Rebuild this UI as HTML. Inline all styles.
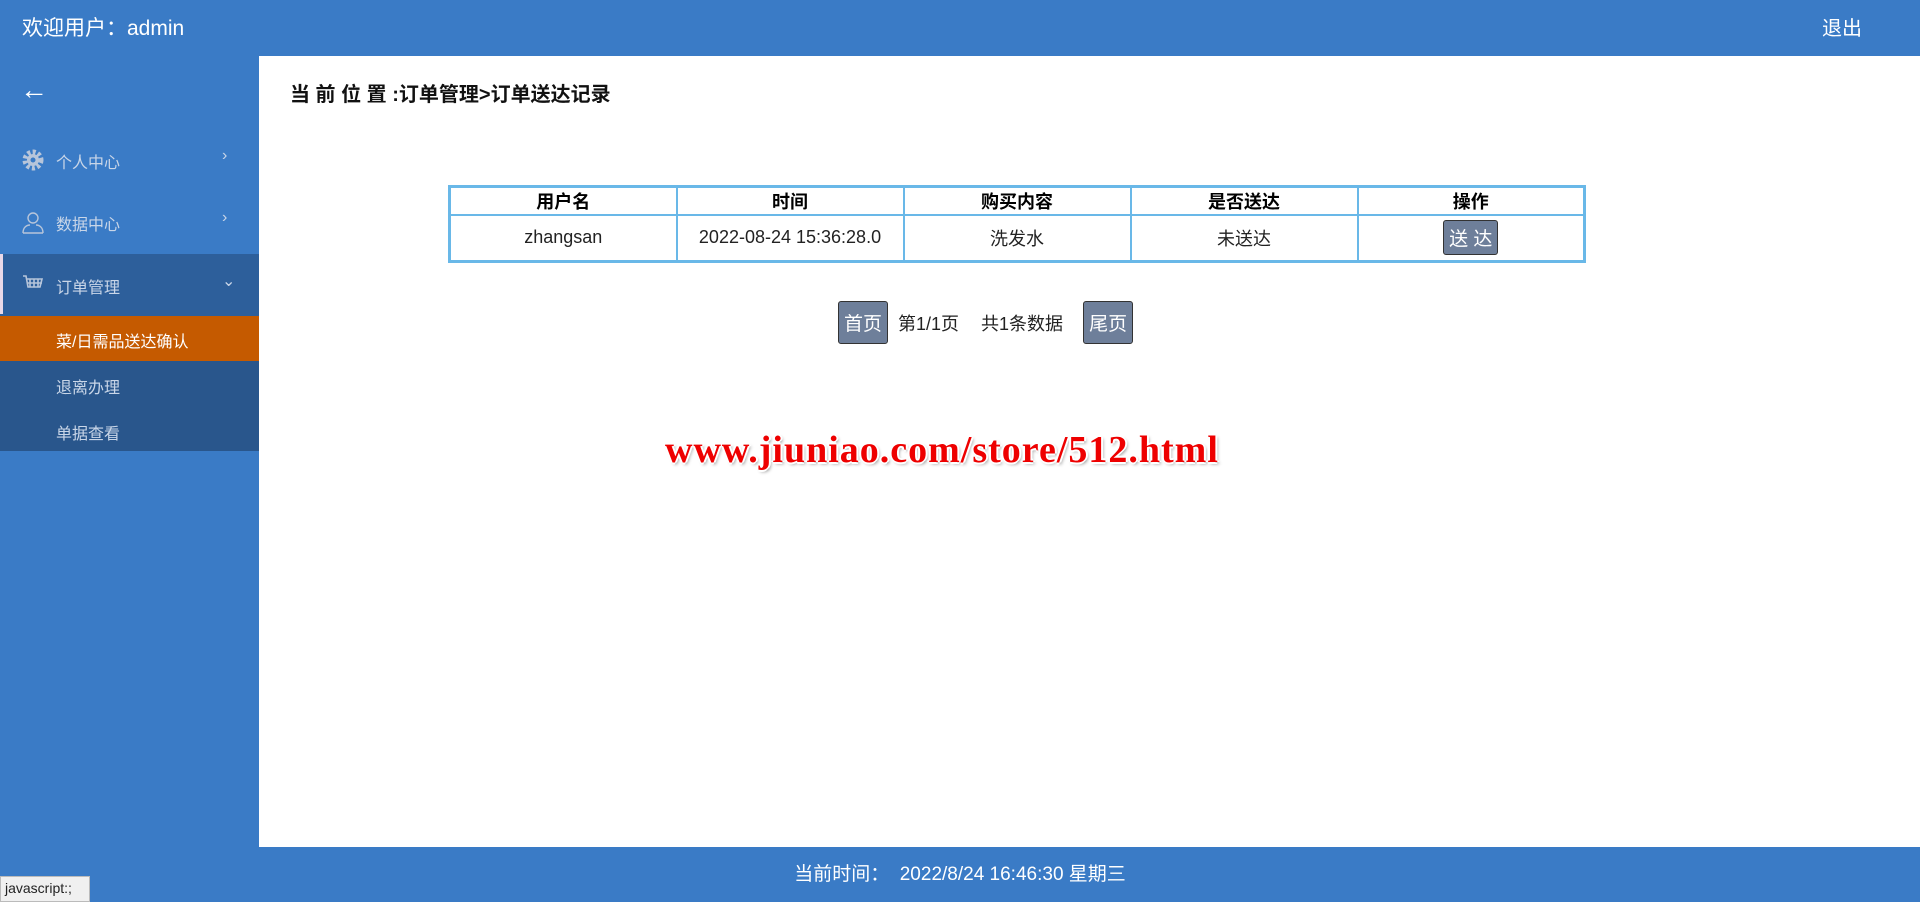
<!DOCTYPE html>
<html><head><meta charset="utf-8"><style>
*{margin:0;padding:0;box-sizing:border-box}
body{width:1920px;height:902px;overflow:hidden;background:#3a7bc6;font-family:"Liberation Sans","Noto Sans CJK SC",sans-serif;position:relative}
.hdr{position:absolute;left:0;top:0;width:1920px;height:56px;background:#3a7bc6;color:#fff}
.hdr .w{position:absolute;left:22px;top:12px;font-size:21px}
.hdr .o{position:absolute;left:1822px;top:12px;font-size:20px}
.side{position:absolute;left:0;top:56px;width:259px;height:791px;color:#c9d6e8;font-size:16px}
.it{position:absolute;left:0;width:259px}
.main{position:absolute;left:259px;top:56px;width:1661px;height:791px;background:#fff}
.title{position:absolute;left:31px;top:22px;font-size:20px;font-weight:bold;color:#111}
table{position:absolute;left:189px;top:129px;width:1138px;border-collapse:collapse;border:3px solid #69b8e8;table-layout:fixed}
td,th{border:2px solid #69b8e8;text-align:center;font-size:18px;color:#222}
th{height:27px;font-weight:bold;color:#000}
td{height:46px}
.btn{display:inline-block;background:#6e7f9a;color:#fff;border:1px solid #333;border-radius:3px;font-size:19px;padding:3px 5px}
.pg{position:absolute;left:579px;top:245px;font-size:18px;color:#222;display:flex;align-items:center}
.wm{position:absolute;left:406px;top:372px;font-family:"Liberation Serif",serif;font-weight:bold;font-size:38px;color:#e00;text-shadow:2px 0 #fff,-2px 0 #fff,0 2px #fff,0 -2px #fff,2px 2px 3px #999;letter-spacing:1px}
.ft{position:absolute;left:0;top:847px;width:1920px;height:55px;text-align:center;color:#fff;font-size:19px;line-height:55px}
.st{position:absolute;left:0;top:876px;width:90px;height:26px;background:#f0f0f0;border:1px solid #bbb;font-size:14px;color:#222;padding:3px 4px}
</style></head><body>
<div class="hdr"><div class="w">欢迎用户：admin</div><div class="o">退出</div></div>
<div class="side">
<div class="it" style="top:18px;left:20px;color:#fff;font-size:28px;font-weight:bold">←</div>
<div class="it" style="top:92px;height:24px">
<svg style="position:absolute;left:21px;top:0" width="24" height="24" viewBox="0 0 24 24"><circle cx="12" cy="12" r="8" fill="none" stroke="#b7c5da" stroke-width="5" stroke-dasharray="3 2.3"/><circle cx="12" cy="12" r="6" fill="#b7c5da"/><circle cx="12" cy="12" r="2.5" fill="#3a7bc6"/></svg>
<span style="position:absolute;left:56px;top:1px">个人中心</span><span style="position:absolute;left:222px;top:-1px">›</span></div>
<div class="it" style="top:154px;height:24px">
<svg style="position:absolute;left:21px;top:0" width="24" height="24" viewBox="0 0 24 24" fill="none" stroke="#b7c5da" stroke-width="1.4"><circle cx="12" cy="8" r="5"/><path d="M2 23c0-6 4-8 7-8M22 23c0-6-4-8-7-8M2 23h20"/></svg>
<span style="position:absolute;left:56px;top:1px">数据中心</span><span style="position:absolute;left:222px;top:-1px">›</span></div>
<div class="it" style="top:198px;height:197px;background:#2d5f9b"></div>
<div class="it" style="top:198px;height:60px;width:3px;background:#e8d8e8"></div>
<div class="it" style="top:217px;height:24px">
<svg style="position:absolute;left:22px;top:2px" width="22" height="18" viewBox="0 0 22 18" fill="none" stroke="#b7c5da" stroke-width="1.6"><path d="M1 1h3l2 11h12l2-8H5M8 4v8M12 4v8M16 4v8M5 8h15"/></svg>
<span style="position:absolute;left:56px;top:1px">订单管理</span><span style="position:absolute;left:222px;top:-2px">⌄</span></div>
<div class="it" style="top:260px;height:45px;background:#c55a00;color:#fff"><span style="position:absolute;left:56px;top:12px">菜/日需品送达确认</span></div>
<div class="it" style="top:305px;height:90px;background:#29568c"></div>
<div class="it" style="top:318px;left:56px">退离办理</div>
<div class="it" style="top:364px;left:56px">单据查看</div>
</div>
<div class="main">
<div class="title">当 前 位 置 :订单管理&gt;订单送达记录</div>
<table><tr><th>用户名</th><th>时间</th><th>购买内容</th><th>是否送达</th><th>操作</th></tr>
<tr><td>zhangsan</td><td>2022-08-24 15:36:28.0</td><td>洗发水</td><td>未送达</td><td><span class="btn">送 达</span></td></tr></table>
<div class="pg"><span class="btn" style="padding:7px 5px">首页</span><span style="margin:0 22px 0 10px">第1/1页</span><span>共1条数据</span><span class="btn" style="padding:7px 5px;margin-left:20px">尾页</span></div>
<div class="wm">www.jiuniao.com/store/512.html</div>
</div>
<div class="ft">当前时间：&nbsp; 2022/8/24 16:46:30 星期三</div>
<div class="st">javascript:;</div>
</body></html>
